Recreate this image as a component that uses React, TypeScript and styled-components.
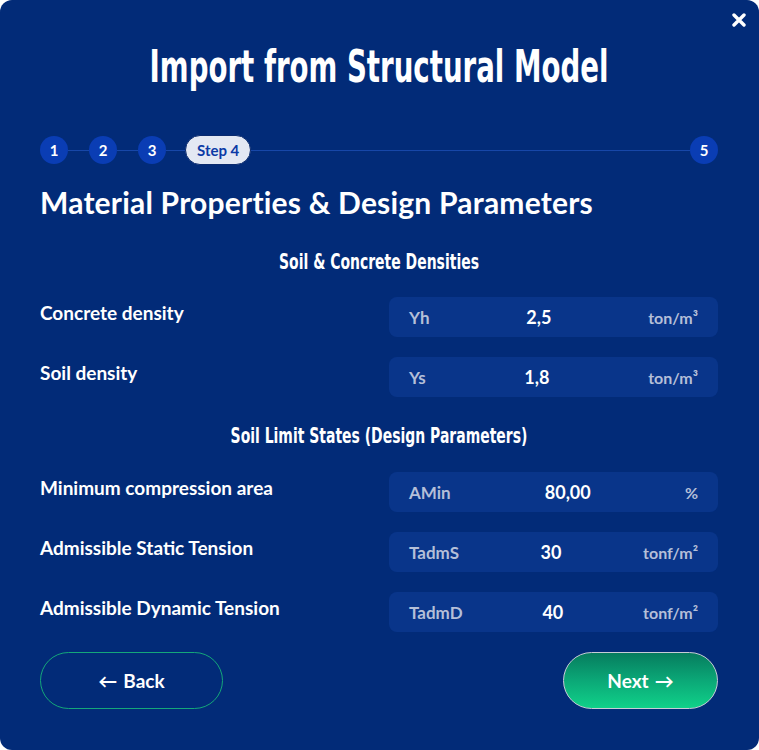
import React from "react";
import styled, { createGlobalStyle } from "styled-components";

const Global = createGlobalStyle`
  html, body { margin: 0; padding: 0; background: #ffffff; }
  body { font-family: "Lato", "Open Sans", sans-serif; }
  * { box-sizing: border-box; }
`;

const Modal = styled.div`
  position: relative;
  width: 759px;
  height: 750px;
  background: #022b78;
  border-radius: 12px;
  padding: 40px 41px 0 40px;
  color: #ffffff;
  display: flex;
  flex-direction: column;
`;

const Close = styled.button`
  position: absolute;
  top: 10px;
  right: 10px;
  width: 20px;
  height: 20px;
  padding: 0;
  border: none;
  background: transparent;
  display: flex;
  align-items: center;
  justify-content: center;
  cursor: pointer;
`;

/* Condensed display face stand-in: DejaVu Sans Bold narrowed horizontally */
const Title = styled.h1`
  margin: 0;
  display: flex;
  justify-content: center;
  font-family: "DejaVu Sans", sans-serif;
  font-weight: 700;
  font-size: 45px;
  line-height: 54px;
  transform: scaleX(0.614);
  transform-origin: 50% 50%;
  white-space: nowrap;
`;

const Stepper = styled.div`
  margin-top: 41px;
  display: flex;
  align-items: center;
  height: 30px;
`;

const Line = styled.div<{ $w?: number }>`
  height: 1px;
  background: #1747a8;
  flex-basis: ${(p) => (p.$w ? `${p.$w}px` : "0")};
  flex-grow: ${(p) => (p.$w ? 0 : 1)};
  flex-shrink: 0;
`;

const Dot = styled.div`
  width: 28px;
  height: 28px;
  border-radius: 50%;
  background: #0a3db4;
  color: #ffffff;
  display: flex;
  align-items: center;
  justify-content: center;
  font-weight: 700;
  font-size: 15px;
  flex-shrink: 0;
`;

const Current = styled.div`
  height: 30px;
  padding: 0 11px;
  border-radius: 15px;
  background: #e3e8f3;
  border: 1px solid #0a2a6e;
  color: #0b3aa6;
  display: flex;
  align-items: center;
  font-weight: 700;
  font-size: 15px;
  flex-shrink: 0;
`;

const Heading = styled.h2`
  margin: 19px 0 0 0;
  font-family: "Lato", sans-serif;
  font-weight: 700;
  font-size: 30px;
  line-height: 36px;
  letter-spacing: 0.2px;
`;

const Section = styled.h3<{ $top: number }>`
  margin: ${(p) => p.$top}px 0 0 0;
  display: flex;
  justify-content: center;
  font-family: "DejaVu Sans", sans-serif;
  font-weight: 700;
  font-size: 21px;
  line-height: 26px;
  transform: scaleX(0.665);
  transform-origin: 50% 50%;
  white-space: nowrap;
`;

const Rows = styled.div<{ $top: number }>`
  margin-top: ${(p) => p.$top}px;
  display: flex;
  flex-direction: column;
  gap: 20px;
`;

const Row = styled.div`
  display: grid;
  grid-template-columns: 1fr 329px;
  align-items: center;
  height: 40px;
`;

const Label = styled.div`
  font-size: 19px;
  font-weight: 700;
  margin-top: -9px;
`;

const Field = styled.div`
  height: 40px;
  border-radius: 8px;
  background: #09358a;
  display: flex;
  align-items: center;
  justify-content: space-between;
  padding: 0 20px;
  font-size: 16px;
  font-weight: 700;
`;

const Sym = styled.span`
  color: #b4bfd8;
  font-size: 17px;
`;

const Val = styled.span`
  color: #ffffff;
  font-size: 18px;
`;

const Unit = styled.span`
  color: #b4bfd8;
`;

const Footer = styled.div`
  margin-top: 20px;
  display: flex;
  justify-content: space-between;
  align-items: center;
`;

const PillButton = styled.button<{ $primary?: boolean }>`
  width: ${(p) => (p.$primary ? 155 : 183)}px;
  height: 57px;
  border-radius: 29px;
  border: 1px solid ${(p) => (p.$primary ? "#c7cdd6" : "#14a77a")};
  background: ${(p) =>
    p.$primary
      ? "linear-gradient(180deg, #067c5e 0%, #0ba877 50%, #10d189 100%)"
      : "transparent"};
  color: #ffffff;
  font-family: "Lato", sans-serif;
  font-weight: 700;
  font-size: 19px;
  display: flex;
  align-items: center;
  justify-content: center;
  gap: 6px;
`;

type R = { label: string; sym: string; val: string; unit: string };

const dens: R[] = [
  { label: "Concrete density", sym: "Yh", val: "2,5", unit: "ton/m³" },
  { label: "Soil density", sym: "Ys", val: "1,8", unit: "ton/m³" },
];
const lim: R[] = [
  { label: "Minimum compression area", sym: "AMin", val: "80,00", unit: "%" },
  { label: "Admissible Static Tension", sym: "TadmS", val: "30", unit: "tonf/m²" },
  { label: "Admissible Dynamic Tension", sym: "TadmD", val: "40", unit: "tonf/m²" },
];

const RowList = ({ items }: { items: R[] }) => (
  <>
    {items.map((r) => (
      <Row key={r.sym}>
        <Label>{r.label}</Label>
        <Field>
          <Sym>{r.sym}</Sym>
          <Val>{r.val}</Val>
          <Unit>{r.unit}</Unit>
        </Field>
      </Row>
    ))}
  </>
);

export default function App() {
  return (
    <>
      <Global />
      <Modal>
        <Close aria-label="close">
          <svg width="14" height="14" viewBox="0 0 14 14">
            <path d="M2 2 L12 12 M12 2 L2 12" stroke="#fff" strokeWidth="3.4" strokeLinecap="round" />
          </svg>
        </Close>
        <Title>Import from Structural Model</Title>
        <Stepper>
          <Dot>1</Dot>
          <Line $w={21} />
          <Dot>2</Dot>
          <Line $w={21} />
          <Dot>3</Dot>
          <Line $w={19} />
          <Current>Step 4</Current>
          <Line />
          <Dot>5</Dot>
        </Stepper>
        <Heading>Material Properties &amp; Design Parameters</Heading>
        <Section $top={29}>Soil &amp; Concrete Densities</Section>
        <Rows $top={22}>
          <RowList items={dens} />
        </Rows>
        <Section $top={26}>Soil Limit States (Design Parameters)</Section>
        <Rows $top={23}>
          <RowList items={lim} />
        </Rows>
        <Footer>
          <PillButton>
            <span>←</span>
            <span>Back</span>
          </PillButton>
          <PillButton $primary>
            <span>Next</span>
            <span>→</span>
          </PillButton>
        </Footer>
      </Modal>
    </>
  );
}
